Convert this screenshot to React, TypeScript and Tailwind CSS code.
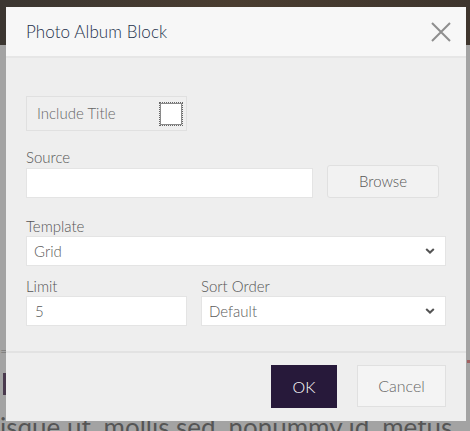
import React from "react";

const font = { fontFamily: "Lato, 'Open Sans', Arial, sans-serif" };

function Chevron() {
  return (
    <svg width="10" height="7" viewBox="0 0 10 7" className="absolute right-[10px] top-1/2 -translate-y-1/2">
      <path d="M1.2 1.4 L5 5 L8.8 1.4" fill="none" stroke="#555" strokeWidth="2" />
    </svg>
  );
}

function SelectBox({ value }: { value: string }) {
  return (
    <div className="relative h-[30px] bg-white border border-[#e4e4e4] flex items-center pl-[7px] text-[15px] text-[#5a5a5a]">
      {value}
      <Chevron />
    </div>
  );
}

export default function App() {
  return (
    <div className="relative w-[470px] h-[431px] overflow-hidden bg-[#a3a3a3] font-light" style={font}>
      {/* page behind the overlay */}
      <div className="h-[45px] bg-gradient-to-r from-[#3b3631] via-[#4a3d30] to-[#3e352d]" />
      <div className="absolute left-0 top-[344px] text-[#6a6a6a] text-[14px] leading-none">=</div>
      <div className="absolute left-[3px] top-[373px] w-[3px] h-[22px] bg-[#4a3a4e]" />
      <div className="absolute left-[467px] top-[360px] w-[3px] h-[3px] bg-[#a06060]" />
      <div className="absolute left-0 top-[412px] whitespace-nowrap text-[26px] leading-[30px] text-[#555] font-normal">
        isque ut. mollis sed. nonummy id. metus.
      </div>

      {/* dialog */}
      <div className="absolute left-[6px] top-[7px] w-[460px] h-[414px] bg-[#eeeeee] flex flex-col">
        <div className="h-[51px] bg-[#f7f7f7] border-b-2 border-[#e6e6e6] flex items-center justify-between pl-[20px] pr-[15px]">
          <span className="text-[17px] text-[#23304a] tracking-[0.1px]">Photo Album Block</span>
          <svg width="20" height="20" viewBox="0 0 20 20">
            <path d="M1 1 L19 19 M19 1 L1 19" stroke="#8e8e8e" strokeWidth="2" />
          </svg>
        </div>

        <div className="flex-1 px-[20px] pt-[38px]">
          <div className="w-[161px] h-[35px] border border-[#e0e0e0] bg-[#efefef] flex items-center justify-between pl-[10px] pr-[4px]">
            <span className="text-[15px] text-[#666]">Include Title</span>
            <div className="w-[22px] h-[22px] bg-white border border-[#8a8a8a] outline outline-1 outline-dotted outline-[#666]" />
          </div>

          <div className="mt-[16px] text-[15px] text-[#555] leading-[20px]">Source</div>
          <div className="flex items-center gap-[14px]">
            <div className="w-[287px] h-[30px] bg-white border border-[#e4e4e4]" />
            <div className="w-[112px] h-[33px] rounded-[3px] bg-[#f2f2f2] border border-[#e0e0e0] flex items-center justify-center text-[15px] text-[#555] -mt-[2px]">
              Browse
            </div>
          </div>

          <div className="mt-[18px] text-[15px] text-[#555] leading-[20px]">Template</div>
          <SelectBox value="Grid" />

          <div className="mt-[10px] flex gap-[14px]">
            <div className="w-[161px]">
              <div className="text-[15px] text-[#555] leading-[20px]">Limit</div>
              <div className="h-[30px] bg-white border border-[#e4e4e4] flex items-center pl-[8px] text-[15px] text-[#5a5a5a]">5</div>
            </div>
            <div className="flex-1">
              <div className="text-[15px] text-[#555] leading-[20px]">Sort Order</div>
              <SelectBox value="Default" />
            </div>
          </div>
        </div>

        <div className="h-[70px] border-t-2 border-[#e2e2e2] flex items-start justify-end gap-[20px] pt-[12px] pr-[20px]">
          <button className="w-[66px] h-[43px] bg-[#27193a] text-white text-[16px]">OK</button>
          <button className="w-[89px] h-[42px] bg-[#f4f4f4] border border-[#e0e0e0] text-[#666] text-[16px]">Cancel</button>
        </div>
      </div>
    </div>
  );
}
